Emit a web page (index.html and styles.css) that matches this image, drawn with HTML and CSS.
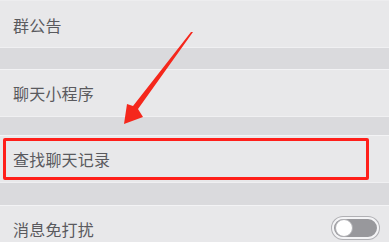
FILE: index.html
```html
<!DOCTYPE html>
<html lang="zh">
<head>
<meta charset="utf-8">
<link rel="stylesheet" href="styles.css">
</head>
<body>
<div class="page">
  <div class="row r1"><span class="label">群公告</span></div>
  <div class="gap g1"></div>
  <div class="row"><span class="label">聊天小程序</span></div>
  <div class="gap g2"></div>
  <div class="row"><span class="label">查找聊天记录</span></div>
  <div class="gap g3"></div>
  <div class="row r4">
    <span class="label">消息免打扰</span>
    <span class="toggle"><span class="knob"></span></span>
  </div>
  <div class="highlight"></div>
  <svg class="arrow" width="389" height="242" viewBox="0 0 389 242">
    <polygon points="193,32 138,109 143,117 124,124 127,104 133,106 191,32" fill="#f5271c"/>
  </svg>
</div>
</body>
</html>
```
FILE: styles.css
```css
html, body {
  margin: 0;
  padding: 0;
  background: #dadadd;
}
.page {
  position: relative;
  width: 389px;
  height: 242px;
  overflow: hidden;
  display: flex;
  flex-direction: column;
  font-family: "Noto Sans CJK SC", "Noto Sans", sans-serif;
}
.row {
  flex: 0 0 48px;
  box-sizing: border-box;
  height: 48px;
  background: #e8e8ea;
  border-top: 1px solid #f3f3f5;
  border-bottom: 1px solid #f0f0f2;
  display: flex;
  align-items: center;
  justify-content: space-between;
  padding: 0 10px 0 13px;
}
.r1 { border-top-color: #ededef; padding-top: 2px; }
.label {
  font-size: 16px;
  color: #5a5a5e;
  letter-spacing: 0.2px;
}
.gap { flex: 0 0 auto; background: #dadadd; }
.g1 { height: 21px; }
.g2 { height: 18px; }
.g3 { height: 22px; }
.toggle {
  position: relative;
  width: 47px;
  height: 22px;
  box-sizing: border-box;
  border-radius: 11px;
  background: #98989c;
  border: 2px solid #f4f4f6;
  box-shadow: 0 0 0 1px #b0b0b4;
  margin-top: -3px;
}
.knob {
  position: absolute;
  left: 1px;
  top: 0px;
  width: 18px;
  height: 18px;
  box-sizing: border-box;
  border-radius: 50%;
  background: #ffffff;
  border: 1px solid #b0b0b4;
}
.highlight {
  position: absolute;
  left: 3px;
  top: 138px;
  width: 366px;
  height: 42px;
  box-sizing: border-box;
  border: 3px solid #ff1f1a;
  border-radius: 2px;
}
.arrow {
  position: absolute;
  left: 0;
  top: 0;
}
```
